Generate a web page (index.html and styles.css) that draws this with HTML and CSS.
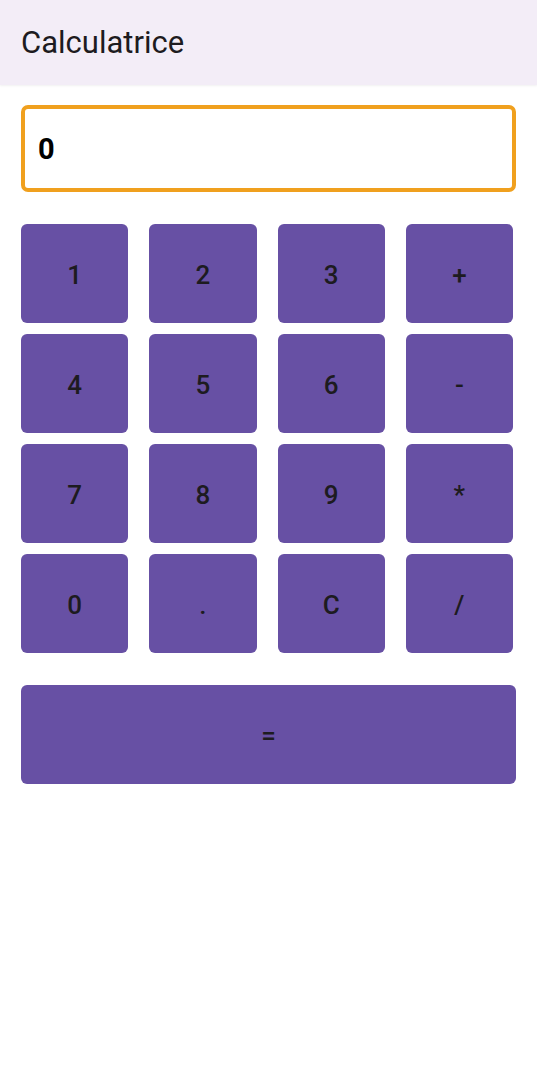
FILE: index.html
```html
<!DOCTYPE html>
<html lang="fr">
<head>
<meta charset="utf-8">
<title>Calculatrice</title>
<link rel="stylesheet" href="styles.css">
</head>
<body>
<header class="appbar"><h1 class="title">Calculatrice</h1></header>
<main class="content">
  <div class="display">0</div>
  <div class="keys">
    <button class="key">1</button><button class="key">2</button><button class="key">3</button><button class="key">+</button>
    <button class="key">4</button><button class="key">5</button><button class="key">6</button><button class="key">-</button>
    <button class="key">7</button><button class="key">8</button><button class="key">9</button><button class="key">*</button>
    <button class="key">0</button><button class="key">.</button><button class="key">C</button><button class="key">/</button>
  </div>
  <button class="key equals">=</button>
</main>
</body>
</html>
```
FILE: styles.css
```css
* { box-sizing: border-box; }
html, body { margin: 0; padding: 0; background: #fff; }
body { font-family: Roboto, "Noto Sans", sans-serif; color: #1d1b20; width: 537px; height: 1080px; }
.appbar {
  height: 85px;
  background: #f3edf7;
  display: flex;
  align-items: center;
  padding: 0 21px;
  box-shadow: 0 1px 2px rgba(0,0,0,0.06);
}
.title { margin: 0; font-size: 31px; font-weight: 400; padding-bottom: 1px; }
.content { padding: 20px 21px 0; display: flex; flex-direction: column; }
.display {
  height: 87px;
  border: 4px solid #f0a01e;
  border-radius: 7px;
  display: flex;
  align-items: center;
  padding: 0 13px;
  font-size: 29px;
  font-weight: 700;
  color: #000;
}
.keys {
  margin-top: 32px;
  margin-right: 3px;
  display: grid;
  grid-template-columns: repeat(4, 1fr);
  column-gap: 21px;
  row-gap: 11px;
}
.key {
  height: 99px;
  border: none;
  border-radius: 6px;
  background: #6750a4;
  color: #1d1b20;
  font-family: Roboto, "Noto Sans", sans-serif;
  font-size: 26px;
  font-weight: 500;
  padding: 3px 0 0;
  display: flex;
  align-items: center;
  justify-content: center;
}
.equals { margin-top: 32px; width: 100%; }
```
